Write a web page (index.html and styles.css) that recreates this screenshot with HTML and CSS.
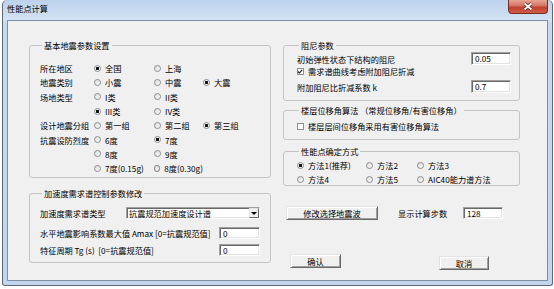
FILE: index.html
```html
<!DOCTYPE html>
<html lang="zh-CN">
<head>
    <meta charset="UTF-8">
    <meta name="viewport" content="width=device-width, initial-scale=1.0">
    <title>性能点计算</title>
    <link rel="stylesheet" href="styles.css">
</head>
<body>
    <div class="window">
        <div class="titlebar">
            <span class="title">性能点计算</span>
            <button class="close-btn">
                <svg width="12" height="9" viewBox="0 0 12 9"><path d="M2.5 1.5 L9.5 7.5 M9.5 1.5 L2.5 7.5" stroke="#5a1a14" stroke-width="3.2"/><path d="M2.5 1.5 L9.5 7.5 M9.5 1.5 L2.5 7.5" stroke="#fff" stroke-width="1.8"/></svg>
            </button>
        </div>
        <div class="client">
            <div class="column left">
                <div class="group basic">
                    <span class="group-title">基本地震参数设置</span>
                    <div class="param-grid">
                        <span>所在地区</span>
                        <span class="opt"><span class="radio checked"></span>全国</span>
                        <span class="opt"><span class="radio"></span>上海</span>
                        <span></span>

                        <span>地震类别</span>
                        <span class="opt"><span class="radio"></span>小震</span>
                        <span class="opt"><span class="radio"></span>中震</span>
                        <span class="opt"><span class="radio checked"></span>大震</span>

                        <span>场地类型</span>
                        <span class="opt"><span class="radio"></span>I类</span>
                        <span class="opt"><span class="radio"></span>II类</span>
                        <span></span>

                        <span></span>
                        <span class="opt"><span class="radio checked"></span>III类</span>
                        <span class="opt"><span class="radio"></span>IV类</span>
                        <span></span>

                        <span>设计地震分组</span>
                        <span class="opt"><span class="radio"></span>第一组</span>
                        <span class="opt"><span class="radio"></span>第二组</span>
                        <span class="opt"><span class="radio checked"></span>第三组</span>

                        <span>抗震设防烈度</span>
                        <span class="opt"><span class="radio"></span>6度</span>
                        <span class="opt"><span class="radio checked"></span>7度</span>
                        <span></span>

                        <span></span>
                        <span class="opt"><span class="radio"></span>8度</span>
                        <span class="opt"><span class="radio"></span>9度</span>
                        <span></span>

                        <span></span>
                        <span class="opt"><span class="radio"></span>7度(0.15g)</span>
                        <span class="opt"><span class="radio"></span>8度(0.30g)</span>
                        <span></span>
                    </div>
                </div>

                <div class="group spectrum">
                    <span class="group-title">加速度需求谱控制参数修改</span>
                    <div class="row row-type">
                        <span>加速度需求谱类型</span>
                        <div class="combo">
                            <span class="combo-text">抗震规范加速度设计谱</span>
                            <span class="combo-arrow"></span>
                        </div>
                    </div>
                    <div class="row row-amax">
                        <span>水平地震影响系数最大值 Amax [0=抗震规范值]</span>
                        <div class="edit small">0</div>
                    </div>
                    <div class="row row-tg">
                        <span>特征周期 Tg (s)&nbsp; [0=抗震规范值]</span>
                        <div class="edit small">0</div>
                    </div>
                </div>
            </div>

            <div class="column right">
                <div class="group damping">
                    <span class="group-title">阻尼参数</span>
                    <div class="row row-d1">
                        <span>初始弹性状态下结构的阻尼</span>
                        <div class="edit">0.05</div>
                    </div>
                    <div class="row row-d2">
                        <span class="opt"><span class="check"><svg width="7" height="7" viewBox="0 0 7 7"><path d="M1 3.5 L2.8 5.3 L6 1.5" fill="none" stroke="#111" stroke-width="1.3"/></svg></span>需求谱曲线考虑附加阻尼折减</span>
                    </div>
                    <div class="row row-d3">
                        <span>附加阻尼比折减系数 k</span>
                        <div class="edit">0.7</div>
                    </div>
                </div>

                <div class="group drift">
                    <span class="group-title">楼层位移角算法 （常规位移角/有害位移角）</span>
                    <div class="row row-drift">
                        <span class="opt"><span class="check"></span>楼层层间位移角采用有害位移角算法</span>
                    </div>
                </div>

                <div class="group method">
                    <span class="group-title">性能点确定方式</span>
                    <div class="method-grid">
                        <span class="opt"><span class="radio checked"></span>方法1(推荐)</span>
                        <span class="opt"><span class="radio"></span>方法2</span>
                        <span class="opt"><span class="radio"></span>方法3</span>
                        <span class="opt"><span class="radio"></span>方法4</span>
                        <span class="opt"><span class="radio"></span>方法5</span>
                        <span class="opt"><span class="radio"></span>AIC40能力谱方法</span>
                    </div>
                </div>

                <div class="actions">
                    <button class="btn btn-wave">修改选择地震波</button>
                    <span class="steps-label">显示计算步数</span>
                    <div class="edit steps">128</div>
                </div>

                <div class="dialog-buttons">
                    <button class="btn btn-ok">确认</button>
                    <button class="btn btn-cancel">取消</button>
                </div>
            </div>
        </div>
    </div>
</body>
</html>
```

FILE: styles.css
```css
body {
    margin: 0;
    background: #fff;
    font-family: "Noto Sans CJK SC", "Liberation Sans", sans-serif;
    font-size: 8.2px;
    color: #000;
}
.window {
    box-sizing: border-box;
    width: 551px;
    height: 286px;
    margin-left: 2px;
    display: flex;
    flex-direction: column;
    padding: 0 4px 4px;
    background: linear-gradient(to bottom, #bcd2ec 0, #d3e3f4 20px, #c6daf0 22px, #c2d7ef 100%);
    border: 1px solid #5d6875;
    border-top: none;
    border-radius: 5px 5px 3px 3px;
}
.titlebar {
    height: 20px;
    display: flex;
    align-items: flex-start;
}
.title {
    margin-top: 2px;
    line-height: 12px;
}
.close-btn {
    margin-left: auto;
    width: 40px;
    height: 14px;
    padding: 0;
    display: flex;
    align-items: center;
    justify-content: center;
    border: 1px solid #7a2b23;
    border-top: none;
    border-radius: 0 0 4px 4px;
    background: linear-gradient(to bottom, #e8a593 0, #d47462 45%, #c1412e 55%, #cf5c44 100%);
}
.client {
    flex: 1;
    display: flex;
    gap: 12px;
    padding: 24px 0 0 21px;
    background: #f0f0f0;
    border: 1px solid #7d8fa3;
}
.column {
    display: flex;
    flex-direction: column;
}
.column.left {
    width: 242px;
}
.column.right {
    width: 237px;
}
.group {
    box-sizing: border-box;
    border: 1px solid #c4c4c4;
    border-radius: 3px;
}
.group-title {
    display: table;
    margin: -7px 0 0 2px;
    padding: 0 2px;
    line-height: 12px;
    background: #f0f0f0;
    white-space: nowrap;
}
.row {
    display: flex;
    align-items: center;
    justify-content: space-between;
    white-space: nowrap;
}

/* 基本地震参数 */
.basic {
    height: 133px;
    padding-left: 10px;
}
.param-grid {
    display: grid;
    grid-template-columns: 54px 60px 49px 1fr;
    grid-auto-rows: 14.3px;
    align-items: center;
    margin-top: 10px;
}
.opt {
    display: flex;
    align-items: center;
    white-space: nowrap;
}
.radio {
    box-sizing: border-box;
    width: 7px;
    height: 7px;
    margin-right: 4px;
    border: 1px solid #8c8c8c;
    border-radius: 50%;
    background: linear-gradient(135deg, #dcdcdc, #fbfbfb);
}
.radio.checked {
    background: radial-gradient(circle, #151515 0, #151515 1.4px, #f2f2f2 1.9px);
}
.check {
    box-sizing: border-box;
    width: 7px;
    height: 7px;
    margin-right: 4px;
    border: 1px solid #8e8f8f;
    background: #fff;
    display: flex;
}
.check svg {
    margin: -1px 0 0 -1px;
}

/* 加速度需求谱 */
.spectrum {
    height: 70px;
    margin-top: 15px;
    padding: 0 10px;
}
.row-type {
    height: 12px;
    margin-top: 8px;
}
.row-amax {
    height: 12px;
    margin-top: 8px;
}
.row-tg {
    height: 12px;
    margin-top: 5px;
}
.combo {
    box-sizing: border-box;
    width: 134px;
    height: 12px;
    display: flex;
    align-items: center;
    background: #fff;
    border: 1px solid;
    border-color: #a0a0a0 #fff #fff #a0a0a0;
    box-shadow: inset 1px 1px 0 #696969, inset -1px -1px 0 #e3e3e3;
}
.combo-text {
    flex: 1;
    padding-left: 2px;
    line-height: 10px;
}
.combo-arrow {
    box-sizing: border-box;
    width: 10px;
    height: 10px;
    display: flex;
    align-items: center;
    justify-content: center;
    background: #f0f0f0;
    border: 1px solid;
    border-color: #e3e3e3 #696969 #696969 #e3e3e3;
}
.combo-arrow::after {
    content: "";
    border-top: 3px solid #000;
    border-left: 3px solid transparent;
    border-right: 3px solid transparent;
}
.edit {
    box-sizing: border-box;
    width: 40px;
    height: 13px;
    padding-left: 3px;
    line-height: 11px;
    background: #fff;
    border: 1px solid;
    border-color: #a0a0a0 #fff #fff #a0a0a0;
    box-shadow: inset 1px 1px 0 #696969, inset -1px -1px 0 #e3e3e3;
}
.edit.small {
    width: 41px;
    height: 12px;
    line-height: 10px;
}

/* 阻尼参数 */
.damping {
    height: 56px;
    padding: 0 8px 0 13px;
}
.row-d1 {
    height: 13px;
    margin-top: 1px;
}
.row-d2 {
    height: 12px;
}
.row-d3 {
    height: 13px;
    margin-top: 3px;
}

.drift {
    height: 30px;
    margin-top: 9px;
    padding-left: 13px;
}
.row-drift {
    height: 12px;
    margin-top: 4px;
}

.method {
    height: 35px;
    margin-top: 11px;
    padding-left: 13px;
}
.method-grid {
    display: grid;
    grid-template-columns: 69px 51px 1fr;
    grid-auto-rows: 14px;
    align-items: center;
    margin-top: 1px;
}

/* 按钮 */
.btn {
    box-sizing: border-box;
    height: 14px;
    padding: 0;
    font-family: inherit;
    font-size: 8.2px;
    line-height: 12px;
    color: #000;
    background: #f0f0f0;
    border: 1px solid;
    border-color: #e3e3e3 #696969 #696969 #e3e3e3;
    box-shadow: inset 1px 1px 0 #fff, inset -1px -1px 0 #a0a0a0;
}
.actions {
    display: flex;
    align-items: center;
    height: 14px;
    margin-top: 20px;
}
.btn-wave {
    width: 92px;
    margin-left: 3px;
}
.steps-label {
    width: 65px;
    margin-left: 20px;
}
.edit.steps {
    height: 12px;
    line-height: 10px;
}
.dialog-buttons {
    display: flex;
    align-items: flex-start;
    margin-top: 34px;
}
.btn-ok {
    width: 51px;
    margin-left: 7px;
}
.btn-cancel {
    width: 50px;
    margin: 2px 0 0 98px;
}
```
